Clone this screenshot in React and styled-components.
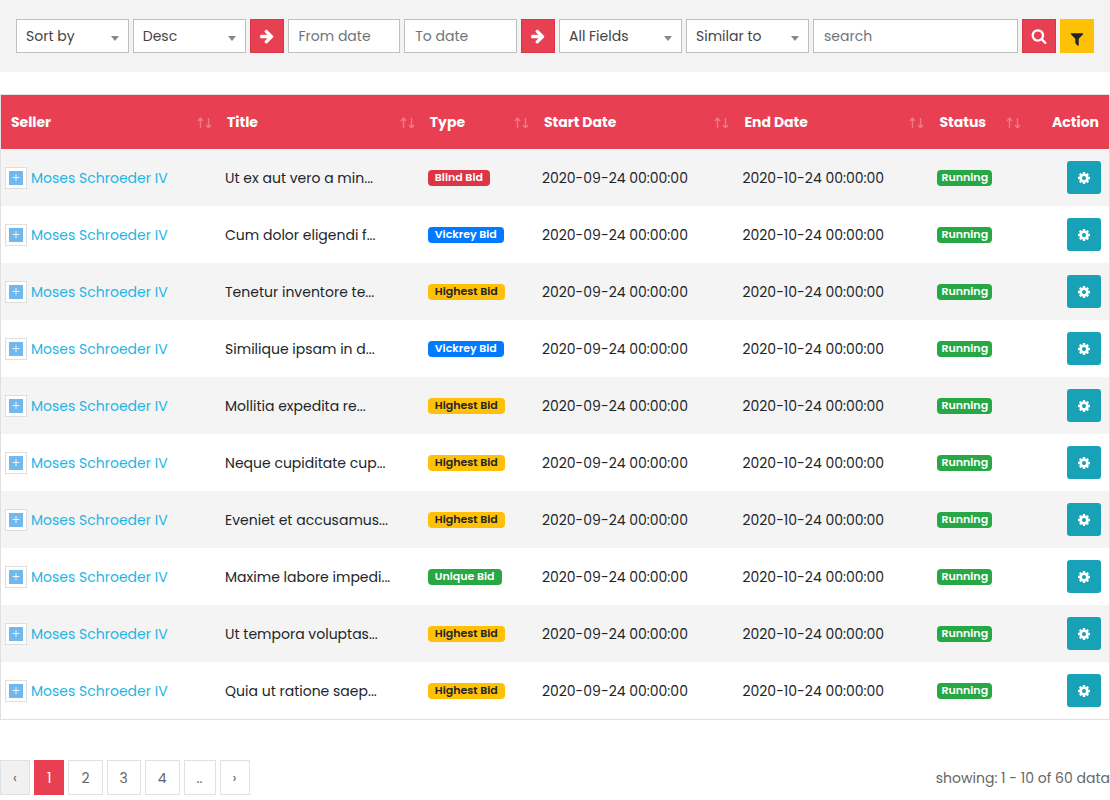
import React from "react";
import styled, { createGlobalStyle } from "styled-components";

const Global = createGlobalStyle`
  *, *::before, *::after { box-sizing: border-box; }
  body {
    margin: 0;
    background: #fff;
    color: #212529;
    font: 14px/20px Poppins, Inter, "Liberation Sans", sans-serif;
  }
  button, input, select { font: inherit; margin: 0; }
`;

const Filters = styled.form`
  display: grid;
  grid-template-columns: 11fr 11fr 34px 11fr 11fr 34px 12fr 12fr 20fr 34px 34px;
  gap: 4px;
  padding: 19px 16px;
  background: #f3f3f3;
`;

const SelectBox = styled.div`
  position: relative;
  min-width: 0;
  &::after {
    content: "";
    position: absolute;
    right: 10px;
    top: 17px;
    border: 4px solid transparent;
    border-top: 5px solid #888;
    border-bottom: 0;
    pointer-events: none;
  }
`;

const Select = styled.select`
  appearance: none;
  display: block;
  width: 100%;
  height: 34px;
  padding: 0 20px 0 9px;
  border: 1px solid #bfbfbf;
  border-radius: 0;
  background: #fff;
  color: #444;
`;

const Field = styled.input`
  min-width: 0;
  width: 100%;
  height: 34px;
  padding: 0 10px;
  border: 1px solid #bfbfbf;
  border-radius: 0;
  background: #fff;
  color: #444;
  &::placeholder { color: #6c757d; opacity: 1; }
`;

const IconButton = styled.button`
  display: flex;
  align-items: center;
  justify-content: center;
  height: 34px;
  padding: ${(p) => (p.$warning ? "6px 0 0" : "0")};
  border: 1px solid ${(p) => (p.$warning ? "#ffc107" : "#dc3545")};
  background: ${(p) => (p.$warning ? "#ffc107" : "#e84052")};
  color: ${(p) => (p.$warning ? "#212529" : "#fff")};
  cursor: pointer;
`;

const TableArea = styled.div`
  margin-top: 22px;
  border: 1px solid #e0e0e0;
`;

const Table = styled.table`
  width: 100%;
  table-layout: fixed;
  border-collapse: collapse;
  white-space: nowrap;
`;

const Col = styled.col`
  width: ${(p) => p.$share}%;
`;

const HeadCell = styled.th`
  height: 54px;
  padding: 0 4px 0 10px;
  background: #e84052;
  color: #fff;
  font-weight: 700;
  text-align: left;
`;

const HeadInner = styled.div`
  display: flex;
  align-items: center;
  justify-content: ${(p) => (p.$end ? "flex-end" : "space-between")};
  padding-right: ${(p) => (p.$end ? "6px" : "0")};
`;

const Row = styled.tr`
  background: #fff;
  &:nth-child(odd) { background: #f4f4f4; }
`;

const Cell = styled.td`
  height: 57px;
  padding: 0 8px;
`;

const SellerCell = styled(Cell)`
  padding: 0 4px;
`;

const Seller = styled.div`
  display: flex;
  align-items: center;
  gap: 4px;
`;

const Expand = styled.button`
  display: flex;
  width: 22px;
  height: 22px;
  padding: 3px;
  border: 1px solid #dedede;
  background: #fff;
  cursor: pointer;
`;

const SellerLink = styled.a`
  color: #1eb5e5;
  text-decoration: none;
`;

const tones = {
  danger: ["#dc3545", "#fff"],
  primary: ["#007bff", "#fff"],
  warning: ["#ffc107", "#212529"],
  success: ["#28a745", "#fff"],
};

const Badge = styled.span`
  display: block;
  width: fit-content;
  padding: 0 ${(p) => (p.$tight ? "4px" : "7px")} 1px;
  border-radius: 4px;
  background: ${(p) => tones[p.$tone][0]};
  color: ${(p) => tones[p.$tone][1]};
  font-size: 11px;
  line-height: 15px;
  font-weight: 600;
`;

const Manage = styled.button`
  display: flex;
  align-items: center;
  justify-content: center;
  width: 34px;
  height: 33px;
  margin-left: auto;
  padding: 1px 0 0;
  border: 0;
  border-radius: 3px;
  background: #17a2b8;
  color: #fff;
  cursor: pointer;
`;

const Footer = styled.footer`
  display: flex;
  align-items: center;
  justify-content: space-between;
  margin-top: 40px;
  color: #666;
`;

const Pages = styled.nav`
  display: flex;
  gap: 4px;
`;

const PageButton = styled.button`
  min-width: 30px;
  height: 35px;
  padding: 0 12px;
  border: 1px solid ${(p) => (p.$current ? "#e84052" : "#dee2e6")};
  background: ${(p) => (p.$current ? "#e84052" : p.disabled ? "#f1f1f1" : "#fff")};
  color: ${(p) => (p.$current ? "#fff" : "#666")};
  cursor: pointer;
`;

const glyphs = {
  arrow:
    "M1600 960q0 54-37 91l-651 651q-39 37-91 37-51 0-90-37l-75-75q-38-38-38-91t38-91l293-293h-704q-52 0-84.5-37.5t-32.5-90.5v-128q0-53 32.5-90.5t84.5-37.5h704l-293-294q-38-36-38-90t38-90l75-75q38-38 90-38 53 0 91 38l651 651q37 35 37 90z",
  search:
    "M1216 832q0-185-131.5-316.5t-316.5-131.5-316.5 131.5-131.5 316.5 131.5 316.5 316.5 131.5 316.5-131.5 131.5-316.5zm512 832q0 52-38 90t-90 38q-54 0-90-38l-343-342q-179 124-399 124-143 0-273.5-55.5t-225-150-150-225-55.5-273.5 55.5-273.5 150-225 225-150 273.5-55.5 273.5 55.5 225 150 150 225 55.5 273.5q0 220-124 399l343 343q37 37 37 90z",
  filter:
    "M1595 295q17 41-14 70l-493 493v742q0 42-39 59-13 5-25 5-27 0-45-19l-256-256q-19-19-19-45v-486l-493-493q-31-29-14-70 17-39 59-39h1280q42 0 59 39z",
  cog:
    "M1152 896q0-106-75-181t-181-75-181 75-75 181 75 181 181 75 181-75 75-181zm512-109v222q0 12-8 23t-20 13l-185 28q-19 54-39 91 35 50 107 138 10 12 10 25t-9 23q-27 37-99 108t-94 71q-12 0-26-9l-138-108q-44 23-91 38-16 136-29 186-7 28-36 28h-222q-14 0-24.5-8.5t-11.5-21.5l-28-184q-49-16-90-37l-141 107q-10 9-25 9-14 0-25-11-126-114-165-168-7-10-7-23 0-12 8-23 15-21 51-66.5t54-70.5q-27-50-41-99l-183-27q-13-2-21-12.5t-8-23.5v-222q0-12 8-23t19-13l186-28q14-46 39-92-40-57-107-138-10-12-10-24 0-10 9-23 26-36 98.5-107.5t94.5-71.5q13 0 26 10l138 107q44-23 91-38 16-136 29-186 7-28 36-28h222q14 0 24.5 8.5t11.5 21.5l28 184q49 16 90 37l142-107q9-9 24-9 13 0 25 10 129 119 165 170 7 8 7 22 0 12-8 23-15 21-51 66.5t-54 70.5q26 50 41 98l183 28q13 2 21 12.5t8 23.5z",
};

const Glyph = ({ name, size }) => (
  <svg width={size} height={size} viewBox="0 0 1792 1792" fill="currentColor" aria-hidden="true">
    <path d={glyphs[name]} />
  </svg>
);

const SortArrows = () => (
  <svg width="16" height="12" viewBox="0 0 16 12" fill="none" stroke="#fff" strokeOpacity="0.3" strokeWidth="1.4" aria-hidden="true">
    <path d="M3.500 12V2.500M1 5l2.500-3L6 5M11.500 2v9.500M9 9l2.500 3L14 9" />
  </svg>
);

const PlusMark = () => (
  <svg width="14" height="14" viewBox="0 0 14 14" aria-hidden="true">
    <path fill="#70b8ee" d="M0 0h14v14H0z" />
    <path stroke="#fff" strokeOpacity="0.85" d="M3.500 6.500h7M7 3v7" />
  </svg>
);

const columns = [
  ["Seller", 19.5],
  ["Title", 18.3],
  ["Type", 10.3],
  ["Start Date", 18.1],
  ["End Date", 17.6],
  ["Status", 8.7],
  ["Action", 7.5],
];

const bidTones = {
  "Blind Bid": "danger",
  "Vickrey Bid": "primary",
  "Highest Bid": "warning",
  "Unique Bid": "success",
};

const auctions = [
  ["Ut ex aut vero a min...", "Blind Bid"],
  ["Cum dolor eligendi f...", "Vickrey Bid"],
  ["Tenetur inventore te...", "Highest Bid"],
  ["Similique ipsam in d...", "Vickrey Bid"],
  ["Mollitia expedita re...", "Highest Bid"],
  ["Neque cupiditate cup...", "Highest Bid"],
  ["Eveniet et accusamus...", "Highest Bid"],
  ["Maxime labore impedi...", "Unique Bid"],
  ["Ut tempora voluptas...", "Highest Bid"],
  ["Quia ut ratione saep...", "Highest Bid"],
];

const Choice = ({ label, value }) => (
  <SelectBox>
    <Select aria-label={label}>
      <option>{value}</option>
    </Select>
  </SelectBox>
);

export default function App() {
  return (
    <>
      <Global />
      <Filters onSubmit={(e) => e.preventDefault()}>
        <Choice label="Sort field" value="Sort by" />
        <Choice label="Sort order" value="Desc" />
        <IconButton aria-label="Apply sorting"><Glyph name="arrow" size={16} /></IconButton>
        <Field aria-label="From date" placeholder="From date" />
        <Field aria-label="To date" placeholder="To date" />
        <IconButton aria-label="Apply dates"><Glyph name="arrow" size={16} /></IconButton>
        <Choice label="Search field" value="All Fields" />
        <Choice label="Comparison" value="Similar to" />
        <Field aria-label="Search" placeholder="search" />
        <IconButton aria-label="Run search"><Glyph name="search" size={16} /></IconButton>
        <IconButton type="button" $warning aria-label="Filter"><Glyph name="filter" size={16} /></IconButton>
      </Filters>

      <TableArea>
        <Table>
          <colgroup>
            {columns.map(([name, share]) => <Col key={name} $share={share} />)}
          </colgroup>
          <thead>
            <tr>
              {columns.map(([name]) => (
                <HeadCell key={name} scope="col">
                  <HeadInner $end={name === "Action"}>
                    {name}
                    {name !== "Action" && <SortArrows />}
                  </HeadInner>
                </HeadCell>
              ))}
            </tr>
          </thead>
          <tbody>
            {auctions.map(([title, bid]) => (
              <Row key={title}>
                <SellerCell>
                  <Seller>
                    <Expand aria-label="Show details"><PlusMark /></Expand>
                    <SellerLink href="#seller">Moses Schroeder IV</SellerLink>
                  </Seller>
                </SellerCell>
                <Cell>{title}</Cell>
                <Cell><Badge $tone={bidTones[bid]}>{bid}</Badge></Cell>
                <Cell>2020-09-24 00:00:00</Cell>
                <Cell>2020-10-24 00:00:00</Cell>
                <Cell><Badge $tone="success" $tight>Running</Badge></Cell>
                <Cell><Manage aria-label="Manage auction"><Glyph name="cog" size={14} /></Manage></Cell>
              </Row>
            ))}
          </tbody>
        </Table>
      </TableArea>

      <Footer>
        <Pages aria-label="Pages">
          <PageButton disabled aria-label="Previous">‹</PageButton>
          <PageButton $current aria-current="page">1</PageButton>
          <PageButton>2</PageButton>
          <PageButton>3</PageButton>
          <PageButton>4</PageButton>
          <PageButton>..</PageButton>
          <PageButton aria-label="Next">›</PageButton>
        </Pages>
        <span>showing: 1 - 10 of 60 data</span>
      </Footer>
    </>
  );
}
